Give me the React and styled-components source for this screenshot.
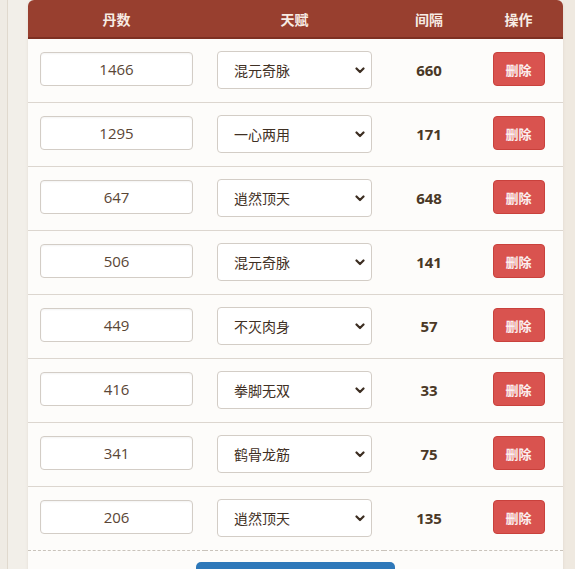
import React, { useState } from 'react';
import styled, { createGlobalStyle } from 'styled-components';

const GlobalStyle = createGlobalStyle`
    html, body {
        margin: 0;
        padding: 0;
        background: #efebe4;
        font-family: "Open Sans", "Noto Sans CJK SC", sans-serif;
    }
`;

const TALENTS = ["混元奇脉", "一心两用", "逍然顶天", "不灭肉身", "拳脚无双", "鹤骨龙筋"];

const initialRows = [
    { id: 1, pills: 1466, talent: "混元奇脉", gap: 660 },
    { id: 2, pills: 1295, talent: "一心两用", gap: 171 },
    { id: 3, pills: 647, talent: "逍然顶天", gap: 648 },
    { id: 4, pills: 506, talent: "混元奇脉", gap: 141 },
    { id: 5, pills: 449, talent: "不灭肉身", gap: 57 },
    { id: 6, pills: 416, talent: "拳脚无双", gap: 33 },
    { id: 7, pills: 341, talent: "鹤骨龙筋", gap: 75 },
    { id: 8, pills: 206, talent: "逍然顶天", gap: 135 },
];

const chevron = encodeURIComponent(
    '<svg xmlns="http://www.w3.org/2000/svg" width="10" height="7" viewBox="0 0 10 7"><path d="M1.5 1.5 5 5l3.5-3.5" fill="none" stroke="#3d2e22" stroke-width="2.2" stroke-linecap="round" stroke-linejoin="round"/></svg>'
);

const App = () => {
    const [rows, setRows] = useState(initialRows);

    const updateRow = (id, key, value) => {
        setRows(rows.map((r) => (r.id === id ? { ...r, [key]: value } : r)));
    };

    const removeRow = (id) => setRows(rows.filter((r) => r.id !== id));

    return (
        <>
            <GlobalStyle />
            <Page>
                <Rail>
                    <Card>
                        <Table>
                            <colgroup>
                                <col style={{ width: 177 }} />
                                <col style={{ width: 179 }} />
                                <col style={{ width: 90 }} />
                                <col />
                            </colgroup>
                            <thead>
                                <tr>
                                    <Th>丹数</Th>
                                    <Th>天赋</Th>
                                    <Th>间隔</Th>
                                    <Th>操作</Th>
                                </tr>
                            </thead>
                            <tbody>
                                {rows.map((row) => (
                                    <Row key={row.id}>
                                        <Td>
                                            <NumberInput
                                                type="text"
                                                value={row.pills}
                                                onChange={(e) => updateRow(row.id, "pills", e.target.value)}
                                            />
                                        </Td>
                                        <Td>
                                            <TalentSelect
                                                value={row.talent}
                                                onChange={(e) => updateRow(row.id, "talent", e.target.value)}
                                            >
                                                {TALENTS.map((t) => (
                                                    <option key={t} value={t}>{t}</option>
                                                ))}
                                            </TalentSelect>
                                        </Td>
                                        <Td>
                                            <Gap>{row.gap}</Gap>
                                        </Td>
                                        <Td>
                                            <DeleteButton onClick={() => removeRow(row.id)}>删除</DeleteButton>
                                        </Td>
                                    </Row>
                                ))}
                            </tbody>
                        </Table>
                        <Footer>
                            {/* label sits below the fold in the screenshot */}
                            <AddButton aria-label="添加一行" />
                        </Footer>
                    </Card>
                </Rail>
            </Page>
        </>
    );
};

const Page = styled.div`
    min-height: 569px;
    padding-left: 7px;
    background: #efebe4;
    display: flex;
`;

const Rail = styled.div`
    flex: 1;
    border-left: 1px solid #e0d9ce;
    padding-left: 20px;
    display: flex;
    align-items: flex-start;
    background: linear-gradient(to right, #f2efe9 0, #f2efe9 555px, #efe9e0 555px);
`;

const Card = styled.div`
    width: 535px;
    background: #fdfcfa;
    border-radius: 6px 6px 0 0;
    overflow: hidden;
    box-shadow: 0 0 3px rgba(120, 100, 80, 0.12);
`;

const Table = styled.table`
    width: 100%;
    border-collapse: collapse;
    table-layout: fixed;
`;

const Th = styled.th`
    height: 37px;
    padding: 0;
    background: #983f2f;
    border-bottom: 2px solid #7d3022;
    color: #f7ece4;
    font-family: "Noto Sans CJK SC", sans-serif;
    font-size: 14px;
    font-weight: 700;
    text-align: center;
`;

const Row = styled.tr`
    border-bottom: 1px solid #dcd6cf;

    &:last-child {
        border-bottom: 1px dashed #c9c3bb;
    }
`;

const Td = styled.td`
    height: 64px;
    padding: 0 12px;
    text-align: center;
    vertical-align: middle;
    box-sizing: border-box;
`;

const NumberInput = styled.input`
    display: block;
    width: 100%;
    height: 34px;
    box-sizing: border-box;
    margin-top: -2px;
    border: 1px solid #d3cdc6;
    border-radius: 4px;
    background: #fff;
    box-shadow: inset 0 1px 2px rgba(0, 0, 0, 0.05);
    color: #5a4636;
    font-family: "Open Sans", "Noto Sans CJK SC", sans-serif;
    font-size: 15px;
    text-align: center;
    outline: none;
`;

const TalentSelect = styled.select`
    display: block;
    width: 100%;
    height: 38px;
    box-sizing: border-box;
    padding: 0 28px 0 16px;
    border: 1px solid #d3cdc6;
    border-radius: 4px;
    background: #fff url("data:image/svg+xml,${chevron}") no-repeat right 6px center;
    appearance: none;
    color: #3f3024;
    font-family: "Noto Sans CJK SC", sans-serif;
    font-size: 14px;
    outline: none;
`;

const Gap = styled.span`
    color: #4a3826;
    font-family: "Open Sans", sans-serif;
    font-size: 15px;
    font-weight: 700;
`;

const DeleteButton = styled.button`
    width: 52px;
    height: 34px;
    margin-top: -2px;
    border: 1px solid #c9413c;
    border-radius: 4px;
    background: #d9534f;
    color: #fbeeee;
    font-family: "Noto Sans CJK SC", sans-serif;
    font-size: 13px;
    font-weight: 700;
    cursor: pointer;
`;

const Footer = styled.div`
    display: flex;
    justify-content: center;
    padding-top: 11px;
`;

const AddButton = styled.button`
    width: 199px;
    height: 38px;
    border: none;
    border-radius: 5px;
    background: #2e78b9;
`;

export default App;
